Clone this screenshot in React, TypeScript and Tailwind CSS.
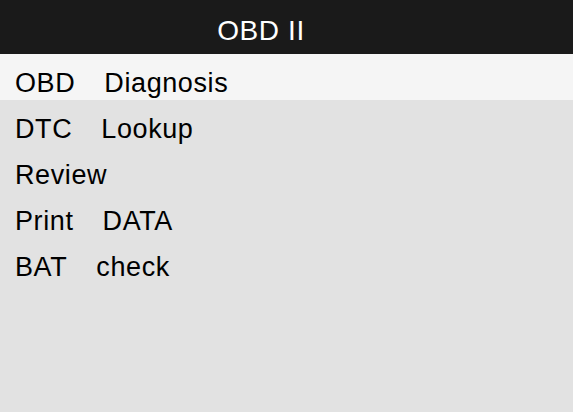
const items: string[][] = [
  ["OBD", "Diagnosis"],
  ["DTC", "Lookup"],
  ["Review"],
  ["Print", "DATA"],
  ["BAT", "check"],
];

export default function App() {
  const selected = 0;

  return (
    <div
      className="flex h-[412px] w-[573px] flex-col bg-[#e2e2e2] text-black"
      style={{ fontFamily: '"Liberation Sans", Arial, sans-serif' }}
    >
      {/* title bar */}
      <div className="flex h-[54px] shrink-0 justify-center bg-[#1a1a1a] pr-[51px] pt-[13px] text-[28px] leading-[36px] tracking-[0.6px] text-white">
        OBD II
      </div>

      {/* menu */}
      <ul className="flex flex-col">
        {items.map((words, i) => (
          <li
            key={i}
            className={`flex h-[46px] items-start pl-[15px] pt-[13px] text-[27px] leading-[32px] tracking-[0.6px] ${
              i === selected ? "bg-[#f5f5f5]" : ""
            }`}
          >
            {words.map((w, j) => (
              <span key={j} className={j > 0 ? "ml-[29px]" : ""}>
                {w}
              </span>
            ))}
          </li>
        ))}
      </ul>
    </div>
  );
}
